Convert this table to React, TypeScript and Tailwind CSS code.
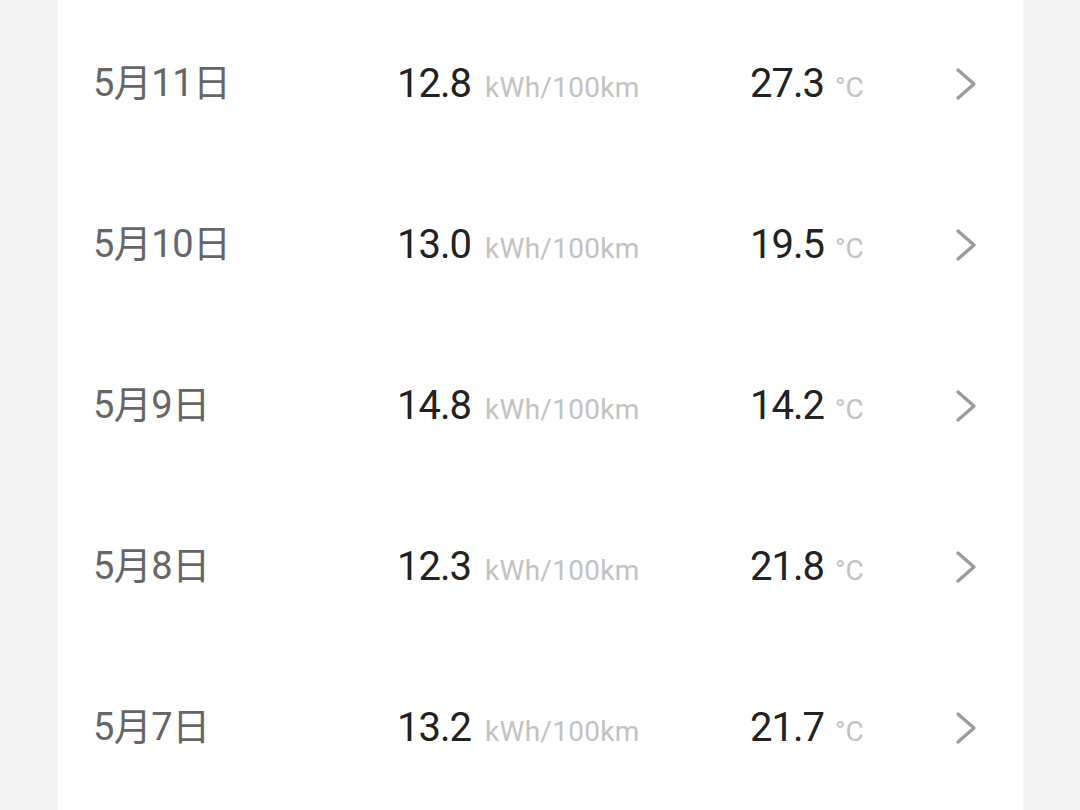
import React from 'react';

interface DayRecord {
  date: string;
  consumption: string;
  temp: string;
}

const records: DayRecord[] = [
  { date: '5月11日', consumption: '12.8', temp: '27.3' },
  { date: '5月10日', consumption: '13.0', temp: '19.5' },
  { date: '5月9日', consumption: '14.8', temp: '14.2' },
  { date: '5月8日', consumption: '12.3', temp: '21.8' },
  { date: '5月7日', consumption: '13.2', temp: '21.7' },
];

const Chevron = () => (
  <svg width="22" height="34" viewBox="0 0 22 34" fill="none" stroke="#9b9b9b" strokeWidth="3.4" strokeLinecap="round" strokeLinejoin="round">
    <path d="M3 3l16 14L3 31" />
  </svg>
);

export default function App() {
  return (
    <div
      className="w-[1080px] h-[810px] overflow-hidden bg-[#f5f5f5]"
      style={{ fontFamily: 'Roboto, "Noto Sans CJK SC", sans-serif' }}
    >
      <div className="ml-[58px] w-[965px] h-full bg-white pt-[3px]">
        {records.map((r) => (
          <div key={r.date} className="h-[161px] flex items-center pl-[35px] pr-[46px]">
            <div className="w-[304px] text-[38px] text-[#666666] tracking-[-0.5px]">{r.date}</div>
            <div className="w-[353px] flex items-baseline">
              <span className="text-[40px] text-[#222222] tracking-[-1px]">{r.consumption}</span>
              <span className="ml-[14px] text-[28px] text-[#c2c2c2] tracking-[0.3px]">kWh/100km</span>
            </div>
            <div className="flex-1 flex items-baseline">
              <span className="text-[40px] text-[#222222] tracking-[-1px]">{r.temp}</span>
              <span className="ml-[11px] text-[28px] text-[#c2c2c2]">°C</span>
            </div>
            <Chevron />
          </div>
        ))}
      </div>
    </div>
  );
}
